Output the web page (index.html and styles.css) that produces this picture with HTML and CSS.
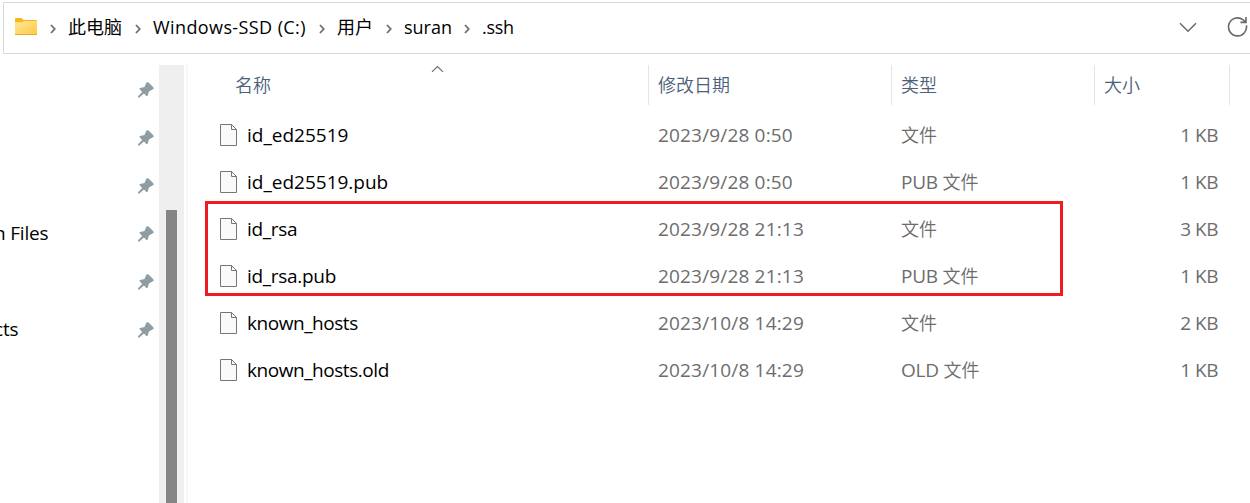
FILE: index.html
```html
<!DOCTYPE html>
<html lang="zh-CN">
<head>
  <meta charset="UTF-8" />
  <title>.ssh</title>
  <link rel="stylesheet" href="styles.css">
</head>
<body>
  <!-- shared icons -->
  <svg class="sprite" width="0" height="0">
    <defs>
      <linearGradient id="folderFill" x1="0" y1="0" x2="1" y2="1">
        <stop offset="0" stop-color="#ffe6a0"/>
        <stop offset="1" stop-color="#ffca3e"/>
      </linearGradient>
      <symbol id="sep" viewBox="0 0 6 10">
        <path d="M1 1l3.7 4L1 9" fill="none" stroke="#6e6e6e" stroke-width="1.8"/>
      </symbol>
      <symbol id="pin" viewBox="0 0 16 16">
        <path d="M8.6 .3Q9.5-.1 10.6 .6L15.3 5.2Q16 6.3 15.3 7L11 9.6L9.7 13.6Q9.2 14.8 8.3 14L6 11.6L1.4 15.6H0V14.2L4.2 10L1.8 7.4Q1 6.5 2.2 6L6.4 4.9Z" fill="#919da5"/>
      </symbol>
      <symbol id="file" viewBox="0 0 17 22">
        <path d="M.5 .5h11l5 5v16H.5z" fill="#fafafa" stroke="#767672"/>
        <path d="M11.5 .5v5h5" fill="none" stroke="#767672"/>
      </symbol>
    </defs>
  </svg>

  <header class="address-bar">
    <svg class="folder" width="22" height="18" viewBox="0 0 22 18">
      <path d="M0 1q0-1 1-1h5.6l2 2H21q1 0 1 1v6H0z" fill="#f8b71c"/>
      <path d="M0 4.2h7.3l1.5-1.2H22v13.6H0z" fill="url(#folderFill)"/>
      <path d="M0 16.5h22" stroke="#eba92c"/>
    </svg>
    <svg class="sep"><use href="#sep"/></svg>
    <span class="crumb crumb-pc">此电脑</span>
    <svg class="sep"><use href="#sep"/></svg>
    <span class="crumb crumb-drive">Windows-SSD (C:)</span>
    <svg class="sep"><use href="#sep"/></svg>
    <span class="crumb crumb-users">用户</span>
    <svg class="sep"><use href="#sep"/></svg>
    <span class="crumb crumb-name">suran</span>
    <svg class="sep"><use href="#sep"/></svg>
    <span class="crumb crumb-last">.ssh</span>
    <div class="tools">
      <svg width="18" height="11" viewBox="0 0 18 11"><path d="M1 1.2l8 8 8-8" fill="none" stroke="#686868" stroke-width="1.5"/></svg>
      <svg width="22" height="22" viewBox="0 0 22 22"><path d="M19.4 9.3A9 9 0 1 1 15.8 3.6L18.8 6M19 1v5.4h-5.6" fill="none" stroke="#686868" stroke-width="1.6"/></svg>
    </div>
  </header>

  <main class="explorer">
    <aside class="sidebar">
      <ul class="pins">
        <li><svg class="pin"><use href="#pin"/></svg></li>
        <li><svg class="pin"><use href="#pin"/></svg></li>
        <li><svg class="pin"><use href="#pin"/></svg></li>
        <li><span class="pin-name pin-files">n Files</span><svg class="pin"><use href="#pin"/></svg></li>
        <li><svg class="pin"><use href="#pin"/></svg></li>
        <li><span class="pin-name pin-projects">cts</span><svg class="pin"><use href="#pin"/></svg></li>
      </ul>
      <div class="scrollbar"><div class="thumb"></div></div>
      <div class="splitter"></div>
    </aside>

    <section class="files">
      <div class="row head">
        <span class="name">名称</span>
        <span>修改日期</span>
        <span>类型</span>
        <span class="size">大小</span>
        <svg class="sort" width="13" height="8" viewBox="0 0 13 8"><path d="M1 6.8l5.5-5.3L12 6.8" fill="none" stroke="#686868" stroke-width="1.1"/></svg>
      </div>
      <div class="row">
        <span class="name"><svg class="file"><use href="#file"/></svg>id_ed25519</span>
        <span class="date">2023/9/28 0:50</span>
        <span class="type"><b>文件</b></span>
        <span class="size">1 KB</span>
      </div>
      <div class="row">
        <span class="name"><svg class="file"><use href="#file"/></svg>id_ed25519.pub</span>
        <span class="date">2023/9/28 0:50</span>
        <span class="type">PUB <b>文件</b></span>
        <span class="size">1 KB</span>
      </div>
      <div class="row">
        <span class="name tight"><svg class="file"><use href="#file"/></svg>id_rsa</span>
        <span class="date">2023/9/28 21:13</span>
        <span class="type"><b>文件</b></span>
        <span class="size">3 KB</span>
      </div>
      <div class="row">
        <span class="name tight"><svg class="file"><use href="#file"/></svg>id_rsa.pub</span>
        <span class="date">2023/9/28 21:13</span>
        <span class="type">PUB <b>文件</b></span>
        <span class="size">1 KB</span>
      </div>
      <div class="row">
        <span class="name tighter"><svg class="file"><use href="#file"/></svg>known_hosts</span>
        <span class="date">2023/10/8 14:29</span>
        <span class="type"><b>文件</b></span>
        <span class="size">2 KB</span>
      </div>
      <div class="row">
        <span class="name tighter"><svg class="file"><use href="#file"/></svg>known_hosts.old</span>
        <span class="date">2023/10/8 14:29</span>
        <span class="type">OLD <b>文件</b></span>
        <span class="size">1 KB</span>
      </div>
      <div class="highlight"></div>
    </section>
  </main>
</body>
</html>
```
FILE: styles.css
```css
* {
  box-sizing: border-box;
}

body {
  margin: 0;
  padding-top: 2px;
  height: 503px;
  overflow: hidden;
  background: #fff;
  color: #000;
  font-family: "Open Sans", "Noto Sans CJK SC", sans-serif;
  font-size: 19px;
  line-height: 26px;
  white-space: nowrap;
}

.sprite {
  position: absolute;
}

svg {
  display: block;
  flex: none;
}

/* Address bar */
.address-bar {
  display: flex;
  align-items: center;
  height: 52px;
  margin-left: 3px;
  padding: 0 1px 2px 11px;
  border: 1px solid #d9d9d9;
  border-right: 0;
  font-size: 18px;
}

.folder {
  margin-right: 13px;
}

.sep {
  width: 6px;
  height: 10px;
  margin-top: 3px;
}

.crumb {
  flex: none;
  margin: 0 12px;
}

.crumb-pc {
  width: 55px;
}

.crumb-drive {
  width: 154px;
  letter-spacing: .4px;
}

.crumb-users {
  width: 37px;
}

.crumb-name {
  width: 48px;
}

.crumb-last {
  letter-spacing: -.3px;
}

.tools {
  display: flex;
  align-items: center;
  gap: 30px;
  margin-left: auto;
}

/* Left pane */
.explorer {
  display: flex;
  height: 449px;
  padding-top: 11px;
}

.sidebar {
  display: flex;
  width: 188px;
}

.pins {
  width: 159px;
  margin: 0;
  padding: 0;
  list-style: none;
}

.pins li {
  display: flex;
  align-items: center;
  height: 48px;
  padding-right: 5px;
}

.pin {
  width: 16px;
  height: 16px;
  margin: 1px 0 0 auto;
}

.pin-name {
  letter-spacing: -.2px;
}

.pin-files {
  margin-left: -6px;
}

.pin-projects {
  margin-left: -6px;
}

.scrollbar {
  width: 25px;
  padding: 145px 7px 0;
  background: #efefef;
}

.thumb {
  height: 100%;
  background: #858585;
}

.splitter {
  width: 2px;
  margin-left: 2px;
  background: #f7f7f7;
}

/* File list */
.files {
  position: relative;
  flex: 1;
  padding-left: 17px;
}

.row {
  display: grid;
  grid-template-columns: 444px 243px 203px 135px;
  align-items: center;
  height: 47px;
  color: #6d6d6d;
}

.row span {
  padding-left: 9px;
}

.row .name {
  display: flex;
  align-items: center;
  padding-left: 15px;
  color: #000;
}

.row .tight {
  letter-spacing: -.3px;
}

.row .tighter {
  letter-spacing: -.45px;
}

.row .date {
  letter-spacing: .17px;
}

.row .type {
  letter-spacing: -.25px;
}

.row .size {
  padding-right: 12px;
  letter-spacing: -.5px;
  text-align: right;
}

.row b {
  font-size: 18px;
  font-weight: 350;
  letter-spacing: 0;
}

.file {
  width: 17px;
  height: 22px;
  margin-right: 10px;
}

.head {
  position: relative;
  height: 40px;
  margin-bottom: 6px;
  color: #4c607a;
  font-size: 18px;
  font-weight: 350;
}

.head span {
  line-height: 40px;
  border-right: 1px solid #e5e5e5;
}

.head .name {
  padding-left: 30px;
  color: #4c607a;
}

.head .size {
  letter-spacing: 0;
  text-align: left;
}

.sort {
  position: absolute;
  left: 226px;
  top: 0;
}

/* Red frame over the rsa key pair */
.highlight {
  position: absolute;
  left: 17px;
  top: 136px;
  width: 858px;
  height: 95px;
  border: 3px solid #ed1c24;
}
```
